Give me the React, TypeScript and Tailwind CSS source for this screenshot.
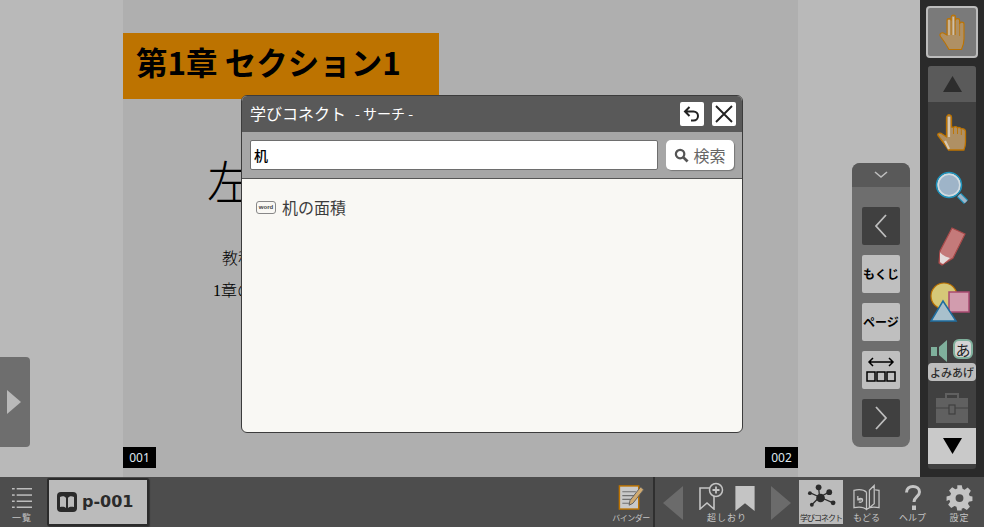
const JP = "font-['Noto_Sans_CJK_JP','Noto_Sans',sans-serif]";

function Triangle({ dir, className }: { dir: "up" | "down" | "left" | "right"; className: string }) {
  const pts = { up: "12,0 24,24 0,24", down: "0,0 24,0 12,24", left: "24,0 24,24 0,12", right: "0,0 24,12 0,24" }[dir];
  return (
    <svg viewBox="0 0 24 24" preserveAspectRatio="none" className={className}>
      <polygon points={pts} fill="currentColor" />
    </svg>
  );
}

function Hand({ pointing }: { pointing?: boolean }) {
  return pointing ? (
    <svg viewBox="0 0 30 38" className="h-[38px] w-[30px]">
      <path d="M10 3c1.200-2 4.500-1.500 4.500 1.500V14l2 .5c1-1.500 3.500-1 4 .5 1.200-1 3.400-.5 3.800 1 1.600-.8 4.200.2 4.200 2.400V29c0 3-.6 5.500-1.600 8H11.500C9 33 5 27.500 1 22.500c-.8-1.500 1-3 3-2.200l5.500 3.500V5c0-.8.100-1.400.5-2z" fill="#af9064" stroke="#bd7300" strokeWidth="1.300" />
      <path d="M12 4v20M8 28l4 8" stroke="#d8c8b0" strokeWidth="2.200" fill="none" />
      <path d="M16.500 15v6M20.500 15v6M24.300 17v5" stroke="#bd7300" strokeWidth=".9" />
    </svg>
  ) : (
    <svg viewBox="0 0 26 36" className="h-[36px] w-[26px]">
      <path d="M8 21V6.500c0-2.500 4.200-2.500 4.200 0V3c0-2.500 4.200-2.500 4.200 0v3.500c0-2.500 4.200-2.500 4.200 0V10c0-2.500 4.400-2.500 4.400 0v15c0 4-1 7-2.500 10.500H10C7.500 31 5 27 1.500 22.500c-1.500-2 .5-4.500 3-3.500z" fill="#af9064" stroke="#bd7300" strokeWidth="1.100" />
      <path d="M10 6v15M14.300 3v18" stroke="#d3c0a2" strokeWidth="1.500" />
      <path d="M12.200 6v15M16.400 6v15M20.600 9v13" stroke="#bd7300" strokeWidth=".7" />
    </svg>
  );
}

function Tool({ children, className }: { children: React.ReactNode; className: string }) {
  return <div className={`flex justify-center ${className}`}>{children}</div>;
}

function SideTools() {
  return (
    <div className="flex w-16 shrink-0 flex-col items-center bg-[#2a2a2a] pt-[6px]">
      <div className="flex h-[52px] w-[52px] items-center justify-center rounded-[4px] border-2 border-[#bcbcbc] bg-[#7a7a7a]">
        <Hand />
      </div>
      <div className="mt-[8px] flex h-[403px] w-[48px] flex-col overflow-hidden rounded-[3px] bg-[#404040]">
        <div className="flex h-[36px] shrink-0 items-center justify-center bg-[#5a5a5a]">
          <Triangle dir="up" className="h-[16px] w-[19px] text-[#2d2d2d]" />
        </div>
        <Tool className="mt-[11px] h-[40px]"><Hand pointing /></Tool>
        <Tool className="mt-[18px] h-[38px]">
          <svg viewBox="0 0 34 34" className="h-[34px] w-[34px]">
            <circle cx="14" cy="14" r="11" fill="#9eb4c8" stroke="#d2dbe0" strokeWidth="2" />
            <circle cx="14" cy="14" r="12.500" fill="none" stroke="#1e94bd" strokeWidth="1.500" />
            <path d="M24 24l7 7" stroke="#1e94bd" strokeWidth="6" />
            <path d="M24 24l7 7" stroke="#9eb4c8" strokeWidth="3.500" />
          </svg>
        </Tool>
        <Tool className="mt-[17px] h-[42px]">
          <svg viewBox="0 0 32 42" className="h-[42px] w-[32px]">
            <path d="M16 2l13 6-12 24-11 7-3-2 1-12z" fill="#c47a7a" stroke="#a84a4a" strokeWidth="1.200" />
            <path d="M4 26c2 3 6 5 10 6l-7 6-3-2z" fill="#e4dcdc" />
          </svg>
        </Tool>
        <Tool className="mt-[13px] h-[42px]">
          <svg viewBox="0 0 42 42" className="-ml-[4px] h-[42px] w-[42px]">
            <circle cx="15" cy="15" r="13" fill="#d6c878" stroke="#bd7300" strokeWidth="1.200" />
            <rect x="20" y="11" width="20" height="20" fill="#d29cae" stroke="#a84a70" strokeWidth="1.500" />
            <polygon points="14,20 27,40 2,40" fill="#a8c0cc" stroke="#1f6ea0" strokeWidth="1.500" />
          </svg>
        </Tool>
        <div className="relative mt-[15px] h-[44px]">
          <svg viewBox="0 0 20 24" className="absolute left-[3px] top-[1px] h-[24px] w-[20px]">
            <rect x="0" y="8" width="6" height="9" fill="#7fb09c" />
            <path d="M8 8l8-7v22l-8-7z" fill="#7fb09c" />
          </svg>
          <div className={`absolute left-[25px] top-[1px] flex h-[20px] w-[20px] items-center justify-center rounded-[6px] border-2 border-[#7fb09c] bg-[#d4d4d4] text-[15px] leading-none text-[#222] ${JP}`}>あ</div>
          <div className={`absolute left-0 top-[25px] flex h-[18px] w-[48px] items-center justify-center rounded-[4px] bg-[#bdbdbd] text-[11px] font-medium leading-none text-[#2c2c2c] ${JP}`}>よみあげ</div>
        </div>
        <Tool className="mt-[11px] h-[35px]">
          <svg viewBox="0 0 34 30" className="h-[30px] w-[34px]">
            <path d="M11 5V1h12v4" fill="none" stroke="#606060" strokeWidth="2" />
            <rect x="1" y="5" width="32" height="25" fill="#606060" />
            <path d="M1 15h32" stroke="#404040" strokeWidth="1" />
            <rect x="14" y="12" width="6" height="9" fill="#606060" stroke="#404040" strokeWidth="1.200" />
          </svg>
        </Tool>
        <div className="flex h-[36px] shrink-0 items-center justify-center bg-[#c9c9c9]">
          <Triangle dir="down" className="h-[16px] w-[19px] text-black" />
        </div>
      </div>
    </div>
  );
}

function BarItem({ label, children, className, labelClass }: { label: string; children: React.ReactNode; className: string; labelClass?: string }) {
  return (
    <div className={`flex shrink-0 flex-col items-center ${className}`}>
      <div className="flex h-[29px] items-center justify-center">{children}</div>
      <span className={`whitespace-nowrap leading-[12px] ${labelClass ?? "text-[9px] tracking-[0.5px]"} ${JP}`}>{label}</span>
    </div>
  );
}

function BottomBar() {
  return (
    <div className="flex h-[50px] shrink-0 items-stretch bg-[#4d4d4d] text-[#c4c4c4]">
      <BarItem label="一覧" className="ml-[12px] mt-[6px] w-[20px]" labelClass="text-[9px] tracking-[1px]">
        <svg viewBox="0 0 20 22" className="h-[22px] w-[20px]">
          {[1, 7.3, 13.500, 19.500].map((y) => (
            <g key={y} fill="#bdbdbd">
              <rect x="0" y={y} width="2.700" height="1.500" />
              <rect x="4.700" y={y} width="15.300" height="1.500" />
            </g>
          ))}
        </svg>
      </BarItem>
      <div className="ml-[15px] mt-[1px] flex h-[48px] w-[102px] items-center rounded-[2px] border-2 border-[#2b2b2b] bg-[#bbbbbb] pl-[8px] shadow-[1px_1px_1px_#333]">
        <svg viewBox="0 0 20 20" className="h-[20px] w-[20px]">
          <rect width="20" height="20" rx="4" fill="#2b2b2b" />
          <path d="M3 5c2-1 5-1 6 1v10c-1-1.500-4-1.500-6-1zM17 5c-2-1-5-1-6 1v10c1-1.500 4-1.500 6-1z" fill="#bbbbbb" />
        </svg>
        <span className="ml-[5px] font-['DejaVu_Sans',sans-serif] text-[16px] font-bold leading-none text-[#2b2b2b]">p-001</span>
      </div>
      <div className="flex-1" />
      <BarItem label="バインダー" className="mt-[6px] w-[40px]" labelClass="text-[8px] tracking-[-0.5px]">
        <svg viewBox="0 0 28 28" className="h-[27px] w-[28px]">
          <rect x="2" y="2" width="20" height="24" fill="#c9c9c9" stroke="#bd7300" strokeWidth="1.500" />
          <path d="M5 8h14M5 12h14M5 16h10M5 20h8" stroke="#707070" strokeWidth="1.200" />
          <path d="M24 3l3 3-11 14-4 2 1-5z" fill="#d0aa70" stroke="#606060" strokeWidth="1" />
        </svg>
      </BarItem>
      <div className="ml-[2px] w-[2px] bg-[#2f2f2f]" />
      <div className="ml-[8px] flex w-[136px] items-start pt-[9px]">
        <Triangle dir="left" className="h-[34px] w-[20px] text-[#6b6b6b]" />
        <div className="ml-[16px] flex w-[56px] flex-col items-center">
          <div className="flex h-[26px] w-full items-start justify-between">
            <svg viewBox="0 0 26 28" className="-mt-[4px] h-[28px] w-[26px]">
              <path d="M1 6h14v21l-7-6-7 6z" fill="none" stroke="#c4c4c4" strokeWidth="1.600" />
              <circle cx="17" cy="8" r="6.500" fill="#4d4d4d" stroke="#c4c4c4" strokeWidth="1.500" />
              <path d="M17 4.500v7M13.500 8h7" stroke="#c4c4c4" strokeWidth="1.800" />
            </svg>
            <svg viewBox="0 0 20 26" className="h-[25px] w-[20px]">
              <path d="M0 0h20v26l-10-8-10 8z" fill="#c4c4c4" />
            </svg>
          </div>
          <span className={`whitespace-nowrap text-[9px] leading-[12px] tracking-[1px] ${JP}`}>超しおり</span>
        </div>
        <Triangle dir="right" className="ml-[16px] h-[34px] w-[20px] text-[#6b6b6b]" />
      </div>
      <BarItem label="学びコネクト" className="mb-[3px] mt-[3px] w-[44px] bg-[#bcbcbc] pt-[3px] !text-[#2b2b2b]" labelClass="text-[8px] tracking-[-1px]">
        <svg viewBox="0 0 30 27" className="h-[27px] w-[29px]">
          <path d="M13 13L12 3M13 13L4 9M13 13L5 21M13 13L23 8M13 13L27 19" stroke="#2b2b2b" strokeWidth="1.300" />
          <circle cx="14" cy="14" r="4.500" fill="#2b2b2b" />
          <circle cx="12" cy="3" r="3" fill="#2b2b2b" />
          <circle cx="3" cy="9" r="2" fill="#2b2b2b" />
          <circle cx="5" cy="21" r="2" fill="#2b2b2b" />
          <circle cx="23" cy="8" r="3" fill="#2b2b2b" />
          <circle cx="27" cy="19" r="2.500" fill="#2b2b2b" />
        </svg>
      </BarItem>
      <BarItem label="もどる" className="ml-[2px] mt-[6px] w-[43px]" labelClass="text-[9px]">
        <svg viewBox="0 0 28 28" className="h-[28px] w-[27px]">
          <path d="M14 8C11 5 6 5 1 6v18c5-1 10-1 13 2 3-3 8-3 13-2V6c-2-.500-3-.500-4-.500M14 8v18M17 6l5-5v19l-5 4z" fill="none" stroke="#c4c4c4" strokeWidth="1.300" />
          <path d="M5 16c1-2 5-2 5 0s-2 3-4 2M5 12v4h4" fill="none" stroke="#c4c4c4" strokeWidth="1.300" />
        </svg>
      </BarItem>
      <BarItem label="ヘルプ" className="ml-[2px] mt-[6px] w-[45px]" labelClass="text-[9px]">
        <svg viewBox="0 0 16 26" className="h-[26px] w-[16px]">
          <path d="M1.500 7.500C1.500 3.500 4.500 1.500 8 1.500s6.500 2 6.500 5.500c0 4.500-5.500 5-5.500 10" fill="none" stroke="#c4c4c4" strokeWidth="3" />
          <rect x="7" y="20.500" width="4" height="4.500" fill="#c4c4c4" />
        </svg>
      </BarItem>
      <BarItem label="設定" className="ml-[2px] mr-[2px] mt-[6px] w-[45px]" labelClass="text-[9px] tracking-[1px]">
        <svg viewBox="0 0 24 24" className="h-[27px] w-[27px]">
          <path fill="#c4c4c4" fillRule="evenodd" d="M10 1h4l.7 3.200 1.800.8 2.800-1.800 2.800 2.800-1.800 2.800.8 1.800L23.500 11v4l-3.200.7-.8 1.800 1.800 2.800-2.800 2.800-2.800-1.800-1.800.8L14 23.500h-4l-.7-3.200-1.800-.8-2.800 1.800-2.800-2.800 1.800-2.800-.8-1.800L.5 15v-4l3.200-.7.800-1.800-1.800-2.800 2.800-2.800 2.800 1.800 1.800-.8zM12 9a3.500 3.500 0 1 0 0 7 3.500 3.500 0 0 0 0-7z" />
        </svg>
      </BarItem>
    </div>
  );
}

function NavPanel() {
  const light = "flex h-[38px] w-[38px] items-center justify-center rounded-[2px] bg-[#bfbfbf] font-bold text-black";
  const dark = "flex h-[38px] w-[38px] items-center justify-center rounded-[2px] bg-[#404040]";
  return (
    <div className="absolute left-[852px] top-[163px] flex h-[284px] w-[58px] flex-col items-center overflow-hidden rounded-[8px] bg-[#6e6e6e]">
      <div className="flex h-[24px] w-full shrink-0 items-center justify-center bg-[#595959]">
        <svg viewBox="0 0 14 8" className="h-[8px] w-[14px]"><path d="M1 1l6 5 6-5" fill="none" stroke="#bdbdbd" strokeWidth="1.600" /></svg>
      </div>
      <div className="mt-[20px] flex flex-col gap-[10px]">
        <div className={dark}>
          <svg viewBox="0 0 14 24" className="h-[24px] w-[14px]"><path d="M12 1L2 12l10 11" fill="none" stroke="#bdbdbd" strokeWidth="1.800" /></svg>
        </div>
        <div className={`${light} text-[12px] ${JP}`}>もくじ</div>
        <div className={`${light} text-[12px] ${JP}`}>ページ</div>
        <div className={light}>
          <svg viewBox="0 0 30 28" className="h-[28px] w-[30px]">
            <path d="M3 6h24M7 2L3 6l4 4M23 2l4 4-4 4" fill="none" stroke="#000" strokeWidth="1.500" />
            <rect x="1" y="16" width="8" height="9" fill="none" stroke="#000" strokeWidth="1.500" />
            <rect x="11" y="16" width="8" height="9" fill="none" stroke="#000" strokeWidth="1.500" />
            <rect x="21" y="16" width="8" height="9" fill="none" stroke="#000" strokeWidth="1.500" />
          </svg>
        </div>
        <div className={dark}>
          <svg viewBox="0 0 14 24" className="h-[24px] w-[14px]"><path d="M2 1l10 11L2 23" fill="none" stroke="#bdbdbd" strokeWidth="1.800" /></svg>
        </div>
      </div>
    </div>
  );
}

function SearchDialog() {
  return (
    <div className={`absolute left-[241px] top-[95px] flex h-[338px] w-[502px] flex-col overflow-hidden rounded-[6px] border border-[#3c3c3c] bg-[#f9f8f4] ${JP}`}>
      <div className="flex h-[36px] shrink-0 items-center bg-[#595959] pl-[8px] pr-[6px] text-white">
        <span className="-mt-[2px] text-[16px] leading-none">学びコネクト</span>
        <span className="-mt-[2px] ml-[9px] text-[14px] leading-none">- サーチ -</span>
        <div className="ml-auto flex gap-[8px]">
          <div className="flex h-[24px] w-[24px] items-center justify-center rounded-[2px] bg-white">
            <svg viewBox="0 0 20 20" className="h-[20px] w-[20px]">
              <path d="M7.500 3L3 7.500 7.500 12M3 7.500h8.500a4.500 4.500 0 0 1 0 9H9" fill="none" stroke="#222" strokeWidth="2" />
            </svg>
          </div>
          <div className="flex h-[24px] w-[24px] items-center justify-center rounded-[2px] bg-white">
            <svg viewBox="0 0 20 20" className="h-[20px] w-[20px]">
              <path d="M2 2l16 16M18 2L2 18" fill="none" stroke="#222" strokeWidth="1.900" />
            </svg>
          </div>
        </div>
      </div>
      <div className="flex h-[47px] shrink-0 items-start border-b border-[#555] bg-[#a6a6a6] pl-[8px] pt-[8px]">
        <div className="flex h-[30px] w-[408px] items-center rounded-[2px] border border-[#6e6e6e] bg-white pl-[3px] text-[14px] font-medium text-black">机</div>
        <div className="ml-[8px] flex h-[30px] w-[68px] items-center justify-center rounded-[5px] bg-white text-[16px] text-[#666] shadow-[1px_1px_1px_#777]">
          <svg viewBox="0 0 16 16" className="mr-[4px] h-[15px] w-[15px]">
            <circle cx="6.500" cy="6.500" r="4.500" fill="none" stroke="#555" strokeWidth="2.400" />
            <path d="M10 10l4.500 4.500" stroke="#555" strokeWidth="3" />
          </svg>
          検索
        </div>
      </div>
      <div className="flex items-center gap-[6px] pl-[14px] pt-[17px]">
        <div className="flex h-[13px] w-[20px] shrink-0 items-center justify-center rounded-[3px] border border-[#888] font-['Liberation_Sans',sans-serif] text-[6px] font-bold leading-none text-[#444]">word</div>
        <span className="text-[16px] leading-[22px] text-[#3c3c3c]">机の面積</span>
      </div>
    </div>
  );
}

function PageContent() {
  return (
    <div className="relative w-[675px] shrink-0 bg-[#afafaf]">
      <div className={`mt-[33px] flex h-[66px] w-[316px] items-center bg-[#bd7300] pb-[8px] pl-[13px] text-[31.5px] font-bold leading-none text-black ${JP}`}>
        第1章 セクション1
      </div>
      <div className="ml-[84px] mt-[56px] font-['Liberation_Serif','Noto_Sans_CJK_JP',serif] font-light text-black">
        <p className="whitespace-nowrap text-[46px] leading-[58px]">左</p>
        <p className="ml-[15px] mt-[30px] whitespace-nowrap text-[16px] leading-[32px]">教科</p>
        <p className="ml-[6px] whitespace-nowrap text-[16px] leading-[32px]">1章の</p>
      </div>
      <div className="absolute bottom-[9px] left-0 flex h-[21px] w-[33px] items-center justify-center bg-black font-['Noto_Sans',sans-serif] text-[12px] text-[#dfe8f0]">001</div>
      <div className="absolute bottom-[9px] right-0 flex h-[21px] w-[33px] items-center justify-center bg-black font-['Noto_Sans',sans-serif] text-[12px] text-[#dfe8f0]">002</div>
    </div>
  );
}

export default function App() {
  return (
    <div className="relative flex h-[527px] w-[984px] flex-col overflow-hidden bg-[#b9b9b9]">
      <div className="flex min-h-0 flex-1">
        <div className="w-[123px] shrink-0" />
        <PageContent />
        <div className="flex-1" />
        <SideTools />
      </div>
      <BottomBar />
      <div className="absolute left-0 top-[357px] flex h-[90px] w-[30px] items-center rounded-r-[4px] bg-[#6e6e6e] pl-[7px]">
        <Triangle dir="right" className="h-[24px] w-[14px] text-[#b9b9b9]" />
      </div>
      <NavPanel />
      <SearchDialog />
    </div>
  );
}
